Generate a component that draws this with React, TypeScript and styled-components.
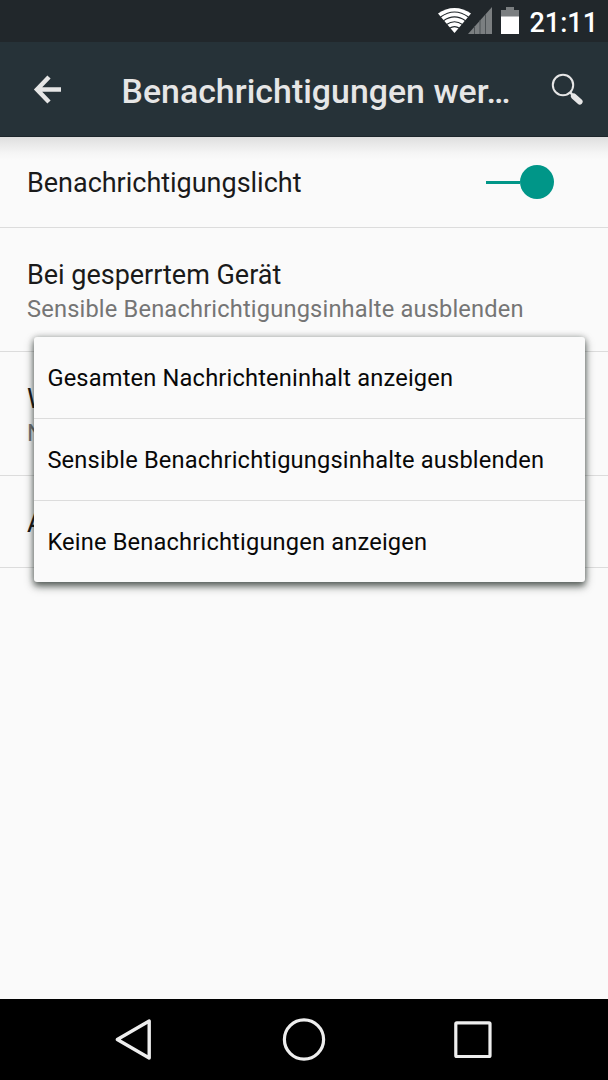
import React from "react";
import styled, { createGlobalStyle } from "styled-components";

const GlobalStyle = createGlobalStyle`
  *, *::before, *::after { box-sizing: border-box; }
  body {
    margin: 0;
    background: #fafafa;
    font-family: Roboto, "Liberation Sans", sans-serif;
  }
`;

const Screen = styled.div`
  width: 608px;
  height: 1080px;
  display: flex;
  flex-direction: column;
  background: #fafafa;
  overflow: hidden;
`;

const StatusBar = styled.header`
  flex: none;
  height: 42px;
  display: flex;
  align-items: center;
  justify-content: flex-end;
  gap: 9px;
  padding: 0 10px 0 0;
  background: #21272b;
  color: #fff;
`;

const Clock = styled.time`
  font-size: 27px;
  line-height: 32px;
  font-weight: 500;
  padding-top: 3px;
  white-space: nowrap;
`;

const AppBar = styled.div`
  flex: none;
  height: 95px;
  display: flex;
  align-items: center;
  background: #263238;
  border-bottom: 1px solid #1d262b;
  color: #e6e6e6;
`;

const IconButton = styled.button<{ $width: number }>`
  flex: none;
  width: ${(p) => p.$width}px;
  height: 94px;
  padding: 0;
  border: 0;
  background: none;
  color: inherit;
  svg { display: block; }
`;

const Title = styled.h1`
  flex: 1;
  margin: 0;
  padding: 5px 0 0 0.5px;
  font-size: 33.8px;
  line-height: 40px;
  font-weight: 500;
  letter-spacing: 0.05px;
  white-space: nowrap;
`;

const Content = styled.main`
  position: relative;
  flex: 1;
  background: linear-gradient(#dedede, #eaeaea 8px, #f5f5f5 16px, #fafafa 23px);
`;

const Row = styled.div<{ $height: number; $top?: number }>`
  height: ${(p) => p.$height}px;
  display: flex;
  align-items: center;
  justify-content: space-between;
  padding: ${(p) => p.$top ?? 3}px 54px 0 27px;
  border-bottom: 1px solid #dcdcdc;
`;

const Label = styled.div`
  font-size: 27px;
  line-height: 34px;
  letter-spacing: -0.02px;
  color: #1a1a1a;
  white-space: nowrap;
`;

const Summary = styled.div`
  font-size: 23.65px;
  line-height: 30px;
  padding-top: 2px;
  letter-spacing: 0.17px;
  color: #757575;
  white-space: nowrap;
`;

const Toggle = styled.button`
  width: 68px;
  height: 34px;
  padding: 0;
  border: 0;
  margin-top: -2px;
  display: flex;
  align-items: center;
  background: none;
`;

const Track = styled.span`
  flex: 1;
  height: 3px;
  background: #009688;
`;

const Thumb = styled.span`
  width: 34px;
  height: 34px;
  border-radius: 50%;
  background: #009688;
`;

const Menu = styled.ul`
  position: absolute;
  left: 34px;
  top: 200px;
  width: 551px;
  height: 245px;
  margin: 0;
  padding: 0;
  list-style: none;
  border-radius: 3px;
  background: #fafafa;
  box-shadow: 0 4px 6px rgba(15, 25, 20, 0.5), 0 4px 11px rgba(15, 25, 20, 0.3), 0 0 6px rgba(15, 25, 20, 0.24);
`;

const MenuItem = styled.li`
  height: 82px;
  display: flex;
  align-items: center;
  padding: 1px 13px 0 13.4px;
  font-size: 23.65px;
  line-height: 30px;
  letter-spacing: 0.17px;
  color: #080808;
  white-space: nowrap;
  &:first-child { height: 81px; }
  & + & { border-top: 1px solid #dcdcdc; }
`;

const NavBar = styled.nav`
  flex: none;
  height: 81px;
  display: flex;
  justify-content: center;
  background: #000;
  color: #eee;
`;

export default function App() {
  return (
    <>
      <GlobalStyle />
      <Screen>
        <StatusBar>
          <svg width="82" height="42" viewBox="438 0 82 42">
            <path d="M438 13.5C447.500 6 461.500 6 471 13.500L454.500 33Z" fill="#fff" />
            <g fill="none" stroke="#21272b" strokeWidth="1.100">
              <path d="M440.500 17Q454.500 7 468.500 17" />
              <path d="M443.500 20.700Q454.500 13 465.500 20.700" />
              <path d="M446.500 24.500Q454.500 19 462.500 24.500" />
              <path d="M449.500 28.300Q454.500 25 459.500 28.300" />
            </g>
            <path d="M468 34L492 7V34Z" fill="#7b7f81" />
            <path d="M474.500 26V34M480 20V34M485.500 14V34" stroke="#4d5255" strokeWidth="1" />
            <path d="M501 10H506V7H514V10H519V17H501Z" fill="#7b7f81" />
            <path d="M501 16.500H519V34H501Z" fill="#fff" />
          </svg>
          <Clock>21:11</Clock>
        </StatusBar>
        <AppBar>
          <IconButton $width={121} aria-label="Zurück">
            <svg width="121" height="94" viewBox="0 42 121 94">
              <path d="M61 89.500H38M49 77L37 89.500L49 102" fill="none" stroke="currentColor" strokeWidth="4.500" />
            </svg>
          </IconButton>
          <Title>Benachrichtigungen wer…</Title>
          <IconButton $width={76} aria-label="Suchen">
            <svg width="76" height="94" viewBox="532 42 76 94">
              <circle cx="563" cy="85" r="10.200" fill="none" stroke="currentColor" strokeWidth="2" />
              <path d="M570 92L573 95.500" stroke="currentColor" strokeWidth="2.500" />
              <path d="M573.800 96.300L579.700 101.700" stroke="currentColor" strokeWidth="5.800" strokeLinecap="round" />
            </svg>
          </IconButton>
        </AppBar>
        <Content>
          <Row $height={91} $top={2}>
            <Label>Benachrichtigungslicht</Label>
            <Toggle role="switch" aria-checked="true" aria-label="Benachrichtigungslicht">
              <Track />
              <Thumb />
            </Toggle>
          </Row>
          <Row $height={124}>
            <div>
              <Label>Bei gesperrtem Gerät</Label>
              <Summary>Sensible Benachrichtigungsinhalte ausblenden</Summary>
            </div>
          </Row>
          <Row $height={124}>
            <div>
              <Label>W</Label>
              <Summary>N</Summary>
            </div>
          </Row>
          <Row $height={92}>
            <Label>A</Label>
          </Row>
          <Menu>
            <MenuItem>Gesamten Nachrichteninhalt anzeigen</MenuItem>
            <MenuItem>Sensible Benachrichtigungsinhalte ausblenden</MenuItem>
            <MenuItem>Keine Benachrichtigungen anzeigen</MenuItem>
          </Menu>
        </Content>
        <NavBar>
          <svg width="608" height="81" viewBox="0 999 608 81" fill="none" stroke="currentColor" strokeLinejoin="round">
            <path d="M117.300 1039.500L149.200 1021V1058Z" strokeWidth="3.400" />
            <circle cx="304" cy="1039.500" r="19.600" strokeWidth="3.200" />
            <rect x="455.800" y="1022.800" width="34.200" height="33.700" rx="1" strokeWidth="3.200" />
          </svg>
        </NavBar>
      </Screen>
    </>
  );
}
